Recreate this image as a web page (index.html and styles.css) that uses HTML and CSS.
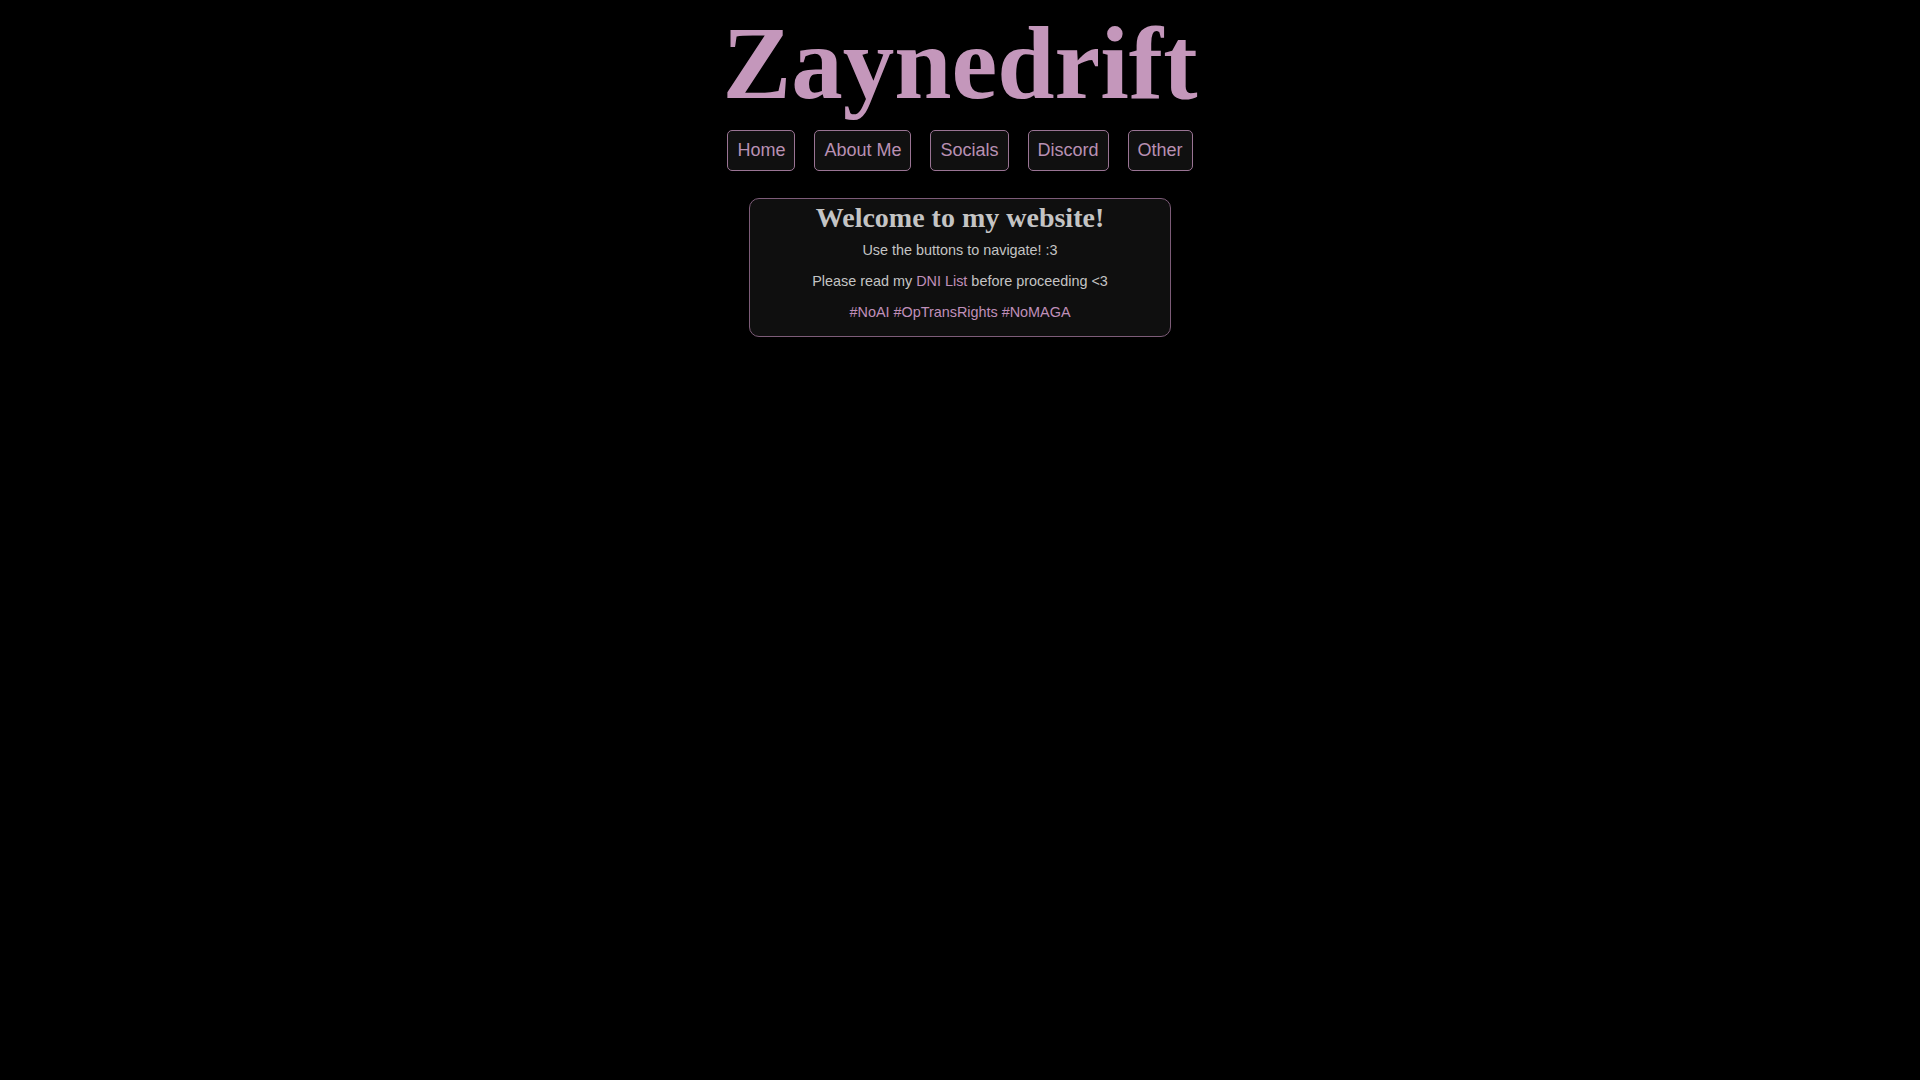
FILE: index.html
```html
<!DOCTYPE html>
<html lang="en">
<head>
<meta charset="utf-8">
<title>Zaynedrift</title>
<link rel="stylesheet" href="styles.css">
</head>
<body>
<header class="header">
  <h1 class="title">Zaynedrift</h1>
  <nav class="nav">
    <a class="nav-btn" href="#">Home</a>
    <a class="nav-btn" href="#">About Me</a>
    <a class="nav-btn" href="#">Socials</a>
    <a class="nav-btn" href="#">Discord</a>
    <a class="nav-btn" href="#">Other</a>
  </nav>
</header>
<main class="main">
  <section class="welcome">
    <h2 class="welcome-title">Welcome to my website!</h2>
    <p class="welcome-text first">Use the buttons to navigate! :3</p>
    <p class="welcome-text">Please read my <a class="pink-link" href="#">DNI List</a> before proceeding &lt;3</p>
    <p class="welcome-text pink">#NoAI #OpTransRights #NoMAGA</p>
  </section>
</main>
</body>
</html>
```
FILE: styles.css
```css
html, body {
  background: #000;
}
body {
  margin: 8px;
  font-family: "Liberation Sans", Arial, sans-serif;
  color: #c8c8c8;
}
.header {
  display: flex;
  flex-direction: column;
  align-items: center;
}
.title {
  margin: 0;
  font-family: "Liberation Serif", "Times New Roman", serif;
  font-weight: bold;
  font-size: 103px;
  line-height: 110px;
  color: #c497bb;
}
.nav {
  display: flex;
  justify-content: center;
  gap: 19px;
  margin-top: 12px;
}
.nav-btn {
  display: block;
  font-size: 18px;
  line-height: 21px;
  padding: 9px 9px;
  border: 1px solid #9a7494;
  border-radius: 5px;
  background: #101010;
  color: #b990b3;
  text-decoration: none;
}
.main {
  display: flex;
  justify-content: center;
  margin-top: 27px;
}
.welcome {
  width: 400px;
  padding: 3px 10px 1px;
  border: 1px solid #7d5c78;
  border-radius: 10px;
  background: #0f0f0f;
  text-align: center;
}
.welcome-title {
  margin: 0;
  font-family: "Liberation Serif", "Times New Roman", serif;
  font-weight: bold;
  font-size: 28px;
  line-height: 32px;
  color: #c4c4c4;
}
.welcome-text {
  margin: 14.4px 0;
  font-size: 14.4px;
  line-height: 16.5px;
  color: #c4c4c4;
}
.welcome-text.first {
  margin-top: 8px;
}
.pink, .pink-link {
  color: #c08fba;
  text-decoration: none;
}
```
